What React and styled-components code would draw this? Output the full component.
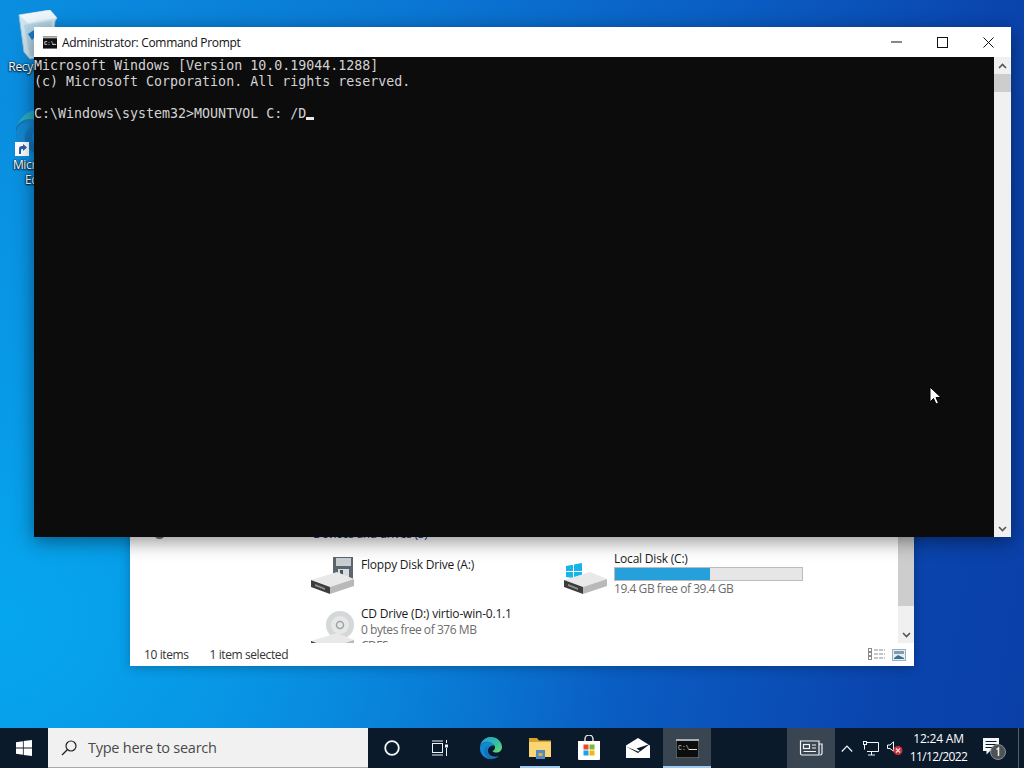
import React from 'react';
import styled, { createGlobalStyle } from 'styled-components';

const uiFont = `'Open Sans', 'Liberation Sans', sans-serif`;

const GlobalStyle = createGlobalStyle`
  html, body {
    margin: 0;
    padding: 0;
    overflow: hidden;
    font-family: ${uiFont};
  }
  * {
    box-sizing: border-box;
  }
`;

const Screen = styled.div`
  width: 1024px;
  height: 768px;
  display: flex;
  flex-direction: column;
  overflow: hidden;
`;

const Desktop = styled.div`
  position: relative;
  flex: 1;
  background:
    radial-gradient(ellipse 620px 520px at 0% 85%, #06a6ee 0%, rgba(6, 166, 238, 0) 100%),
    linear-gradient(100deg, #0a8fe0 0%, #0a78d4 35%, #0a5cc2 65%, #0a44ad 88%, #0a3fa8 100%);
`;

const IconColumn = styled.div`
  display: flex;
  flex-direction: column;
  width: 76px;
  padding-top: 10px;
`;

const DesktopItem = styled.div`
  height: 98px;
  display: flex;
  flex-direction: column;
  align-items: center;
  gap: 1px;
`;

const DesktopLabel = styled.div`
  width: 76px;
  color: #fff;
  font-size: 12px;
  line-height: 15px;
  letter-spacing: -0.3px;
  text-align: center;
  text-shadow: 0 1px 2px #000, 0 0 2px #000;
`;

const Shortcut = styled.div`
  position: relative;
  width: 48px;
  height: 48px;
`;

const ShortcutBadge = styled.svg`
  position: absolute;
  left: 1px;
  bottom: 0;
`;

/* Explorer window peeking out below the console */
const ExplorerWindow = styled.div`
  position: absolute;
  left: 130px;
  top: 380px;
  width: 784px;
  height: 286px;
  display: flex;
  flex-direction: column;
  background: #fff;
  box-shadow: 0 2px 10px rgba(0, 0, 0, 0.25);
`;

const ExplorerBody = styled.div`
  flex: 1;
  min-height: 0;
  display: flex;
  overflow: hidden;
`;

const NavPane = styled.div`
  width: 180px;
  flex: none;
  padding: 152px 0 0 25px;
`;

const NavMark = styled.div`
  width: 9px;
  height: 7px;
  border-radius: 0 0 4px 4px;
  background: #777;
`;

const Drives = styled.div`
  flex: 1;
  padding-top: 146px;
`;

const GroupHeading = styled.div`
  height: 24px;
  padding-left: 3px;
  font-size: 12px;
  line-height: 16px;
  letter-spacing: -0.3px;
  color: #1a3e8c;
`;

const DriveGrid = styled.div`
  display: grid;
  grid-template-columns: 253px 1fr;
  grid-auto-rows: 48px;
  row-gap: 7px;
`;

const DriveTile = styled.div`
  display: flex;
  gap: 5px;
  align-items: flex-start;
`;

const DriveInfo = styled.div`
  padding-top: ${(props) => props.$top || 0}px;
  display: flex;
  flex-direction: column;
`;

const DriveName = styled.div`
  font-size: 12px;
  line-height: 17px;
  letter-spacing: -0.2px;
  color: #1a1a1a;
  white-space: nowrap;
`;

const DriveSub = styled.div`
  font-size: 12px;
  line-height: 16px;
  letter-spacing: -0.45px;
  color: #6d6d6d;
  white-space: nowrap;
`;

const UsageBar = styled.div`
  width: 189px;
  height: 14px;
  border: 1px solid #bcbcbc;
  background: #e6e6e6;
`;

const UsageFill = styled.div`
  height: 100%;
  background: #26a0da;
`;

const ScrollBar = styled.div`
  flex: none;
  width: ${(props) => props.$width}px;
  display: flex;
  flex-direction: column;
  background: #f0f0f0;
`;

const ScrollArrow = styled.div`
  height: 17px;
  flex: none;
  display: flex;
  align-items: center;
  justify-content: center;
`;

const ScrollThumb = styled.div`
  flex: none;
  height: ${(props) => props.$height}px;
  background: #cdcdcd;
`;

const ScrollTrack = styled.div`
  flex: 1;
`;

const StatusBar = styled.div`
  height: 23px;
  flex: none;
  display: flex;
  align-items: center;
  padding: 0 8px 0 14px;
  font-size: 12px;
  letter-spacing: -0.4px;
  color: #333;
`;

const StatusText = styled.span`
  margin-right: 21px;
`;

const ViewButtons = styled.div`
  margin-left: auto;
  display: flex;
  gap: 6px;
  align-items: center;
`;

/* Console window */
const ConsoleWindow = styled.div`
  position: absolute;
  left: 34px;
  top: 27px;
  width: 977px;
  height: 510px;
  display: flex;
  flex-direction: column;
  background: #fff;
  box-shadow: 0 4px 18px rgba(0, 0, 0, 0.45);
`;

const TitleBar = styled.div`
  height: 30px;
  flex: none;
  display: flex;
  align-items: center;
  padding-left: 9px;
  background: #fff;
`;

const TitleText = styled.div`
  margin-left: 5px;
  font-size: 12px;
  letter-spacing: -0.3px;
  color: #111;
`;

const WindowControls = styled.div`
  margin-left: auto;
  display: flex;
  height: 100%;
`;

const ControlButton = styled.div`
  width: 46px;
  display: flex;
  align-items: center;
  justify-content: center;
`;

const ConsoleBody = styled.div`
  flex: 1;
  min-height: 0;
  display: flex;
  background: #0c0c0c;
`;

const ConsoleText = styled.pre`
  flex: 1;
  margin: 0;
  padding-top: 1px;
  font-family: 'DejaVu Sans Mono', 'Liberation Mono', monospace;
  font-size: 13.3px;
  line-height: 16px;
  color: #d2d2d2;
`;

const Caret = styled.span`
  display: inline-block;
  width: 8px;
  height: 3px;
  background: #e8e8e8;
  vertical-align: -2px;
`;

const Pointer = styled.svg`
  position: absolute;
  left: 929px;
  top: 386px;
`;

/* Taskbar */
const Taskbar = styled.div`
  height: 40px;
  flex: none;
  display: flex;
  align-items: stretch;
  background: #0b1a2b;
`;

const StartButton = styled.div`
  width: 48px;
  display: flex;
  align-items: center;
  justify-content: center;
`;

const SearchBox = styled.div`
  width: 320px;
  display: flex;
  align-items: center;
  gap: 11px;
  padding-left: 13px;
  background: #f1f1f1;
  border-bottom: 1px solid #a8a8a8;
`;

const SearchHint = styled.span`
  font-size: 14.5px;
  letter-spacing: -0.25px;
  color: #4a4a4a;
`;

const TaskButton = styled.div`
  position: relative;
  width: ${(props) => props.$width || 49}px;
  display: flex;
  align-items: center;
  justify-content: center;
  background: ${(props) => (props.$active ? '#3a4552' : 'transparent')};
`;

const RunningMark = styled.div`
  position: absolute;
  bottom: 0;
  left: ${(props) => (props.$full ? 0 : 5)}px;
  right: ${(props) => (props.$full ? 0 : 4)}px;
  height: 2px;
  background: #9ccaf0;
`;

const PinnedGap = styled.div`
  width: 2px;
`;

const Tray = styled.div`
  margin-left: auto;
  display: flex;
  align-items: stretch;
`;

const TrayIcon = styled.div`
  width: ${(props) => props.$width || 24}px;
  display: flex;
  align-items: center;
  justify-content: center;
`;

const Clock = styled.div`
  width: 63px;
  display: flex;
  flex-direction: column;
  justify-content: center;
  text-align: center;
  color: #fff;
  font-size: 12px;
  line-height: 18px;
  letter-spacing: -0.2px;
`;

const ClockDate = styled.div`
  letter-spacing: -0.6px;
`;

const ShowDesktop = styled.div`
  width: 6px;
  border-left: 1px solid #56606c;
`;

const NotificationSlot = styled.div`
  width: 48px;
  display: flex;
  align-items: center;
  justify-content: center;
`;

const WindowsLogo = ({ size = 16, fill = '#fff' }) => (
  <svg width={size} height={size} viewBox="0 0 16 16">
    <path fill={fill} d="M0 2.2 6.9 1.2V7.6H0ZM7.7 1.1 16 0V7.6H7.7ZM0 8.4H6.9V14.8L0 13.8ZM7.7 8.4H16V16L7.7 14.9Z" />
  </svg>
);

const EdgeLogo = ({ size = 24 }) => (
  <svg width={size} height={size} viewBox="0 0 48 48">
    <defs>
      <linearGradient id="edgeBlue" x1="0" y1="1" x2="1" y2="0.3">
        <stop offset="0" stopColor="#0c59a4" />
        <stop offset="1" stopColor="#1b9de2" />
      </linearGradient>
      <linearGradient id="edgeGreen" x1="0" y1="0" x2="1" y2="1">
        <stop offset="0" stopColor="#1f9fd8" />
        <stop offset="0.6" stopColor="#35c1a0" />
        <stop offset="1" stopColor="#6edc6a" />
      </linearGradient>
    </defs>
    <path fill="url(#edgeBlue)" d="M24 2C11 2 2 12 2 24c0 13 10 22 22 22 6 0 12-2 16-6-8 3-20 1-22-9-1-5 2-9 6-11 5-2 10 0 10 0C33 12 30 2 24 2Z" />
    <path fill="url(#edgeGreen)" d="M24 2c13 0 22 10 22 20 0 7-5 11-11 11-4 0-7-1-8-3 3-1 5-3 5-7 0-7-8-12-16-12-6 0-12 3-14 9C5 10 13 2 24 2Z" />
    <path fill="#1387cf" d="M2 24c0 13 10 22 22 22-8-2-14-9-13-18 1-6 6-11 13-11-3-2-7-3-10-3C8 14 3 18 2 24Z" />
  </svg>
);

const RecycleBinIcon = () => (
  <svg width="48" height="50" viewBox="0 0 48 50">
    <path fill="#cfe6f2" stroke="#9fc4d8" strokeWidth="1" d="M5 5 36 0 43 8 41 11 37 46 16 49 10 42Z" />
    <path fill="#eef7fb" d="M5 5 36 0 43 8 14 13Z" />
    <path fill="#a9d0e4" d="M10 15 38 11 35 43 16 46Z" opacity="0.7" />
    <path fill="#1f7fd0" d="M14 24 20 20 22 26 18 30Z M24 32 30 28 28 36 22 38Z" />
  </svg>
);

const DriveBody = () => (
  <>
    <path fill="#e9e9e9" d="M1 30 27 22 44 29 20 37Z" />
    <path fill="#3d3d3d" d="M1 30 20 37V44L1 37Z" />
    <path fill="#b9b9b9" d="M20 37 44 29V36L20 44Z" />
    <path fill="#8f8f8f" d="M5 34 15 38V40L5 36Z" />
  </>
);

const FloppyDriveIcon = () => (
  <svg width="46" height="44" viewBox="0 0 46 44">
    <path fill="#5c6670" d="M23 7H43V29L23 29Z" />
    <rect x="26" y="8" width="15" height="8" fill="#c9ced2" />
    <rect x="28" y="19" width="11" height="8" fill="#d8dcdf" />
    <rect x="30" y="20" width="3" height="6" fill="#4a525a" />
    <DriveBody />
  </svg>
);

const LocalDiskIcon = () => (
  <svg width="46" height="44" viewBox="0 0 46 44">
    <g fill="#16b4ea" transform="translate(2 6)">
      <path d="M1 10 8 8.700V15H1Z M9 8.500 17 7V15H9Z M1 16H8V22L1 21Z M9 16H17V23L9 22Z" />
    </g>
    <DriveBody />
  </svg>
);

const CdDriveIcon = () => (
  <svg width="46" height="44" viewBox="0 0 46 44">
    <circle cx="30" cy="20" r="14" fill="#d4d8d8" />
    <circle cx="30" cy="20" r="9" fill="#e6e8e8" />
    <circle cx="30" cy="20" r="3.500" fill="none" stroke="#9ea3a3" strokeWidth="1.500" />
    <g transform="translate(0 6)">
      <DriveBody />
    </g>
  </svg>
);

const CmdIcon = ({ size = 14, tall = 13, border = '#b8b8b8' }) => (
  <svg width={size} height={tall} viewBox="0 0 15 13">
    <rect x="0" y="0" width="15" height="13" fill="#111" />
    <rect x="0" y="0" width="15" height="2" fill={border} />
    <text x="1" y="9" fontSize="6" fontFamily="Liberation Mono, monospace" fontWeight="700" fill="#ddd">C:\</text>
    <rect x="10" y="8" width="4" height="1" fill="#ddd" />
  </svg>
);

const drives = [
  { key: 'floppy', Icon: FloppyDriveIcon, name: 'Floppy Disk Drive (A:)', top: 6 },
  { key: 'local', Icon: LocalDiskIcon, name: 'Local Disk (C:)', free: 19.4, total: 39.4 },
  { key: 'cd', Icon: CdDriveIcon, name: 'CD Drive (D:) virtio-win-0.1.1', lines: ['0 bytes free of 376 MB', 'CDFS'] },
];

const App = () => {
  return (
    <Screen>
      <GlobalStyle />
      <Desktop>
        <IconColumn>
          <DesktopItem>
            <Shortcut>
              <RecycleBinIcon />
            </Shortcut>
            <DesktopLabel>Recycle Bin</DesktopLabel>
          </DesktopItem>
          <DesktopItem>
            <Shortcut>
              <EdgeLogo size={48} />
              <ShortcutBadge width="14" height="14" viewBox="0 0 14 14">
                <rect width="14" height="14" fill="#fff" />
                <path fill="#2a5fa8" d="M4 12V7c0-2 1-3 3-3h1V2l4 3.500-4 3.500V7H7C6 7 6 8 6 9v3Z" />
              </ShortcutBadge>
            </Shortcut>
            <DesktopLabel>Microsoft Edge</DesktopLabel>
          </DesktopItem>
        </IconColumn>

        <ExplorerWindow>
          <ExplorerBody>
            <NavPane>
              <NavMark />
            </NavPane>
            <Drives>
              <GroupHeading>Devices and drives (3)</GroupHeading>
              <DriveGrid>
                {drives.map(({ key, Icon, name, top, free, total, lines }) => (
                  <DriveTile key={key}>
                    <Icon />
                    <DriveInfo $top={top}>
                      <DriveName>{name}</DriveName>
                      {total && (
                        <>
                          <UsageBar>
                            <UsageFill style={{ width: `${((total - free) / total) * 100}%` }} />
                          </UsageBar>
                          <DriveSub>{`${free} GB free of ${total} GB`}</DriveSub>
                        </>
                      )}
                      {lines && lines.map((line) => <DriveSub key={line}>{line}</DriveSub>)}
                    </DriveInfo>
                  </DriveTile>
                ))}
              </DriveGrid>
            </Drives>
            <ScrollBar $width={16}>
              <ScrollArrow />
              <ScrollThumb $height={209} />
              <ScrollTrack />
              <ScrollArrow>
                <svg width="9" height="6" viewBox="0 0 9 6">
                  <path d="M1 1 4.500 4.500 8 1" fill="none" stroke="#555" strokeWidth="1.600" />
                </svg>
              </ScrollArrow>
            </ScrollBar>
          </ExplorerBody>
          <StatusBar>
            <StatusText>10 items</StatusText>
            <StatusText>1 item selected</StatusText>
            <ViewButtons>
              <svg width="18" height="13" viewBox="0 0 18 13">
                <g fill="none" stroke="#8a8a8a">
                  <rect x="0.500" y="0.500" width="3" height="3" />
                  <rect x="0.500" y="4.500" width="3" height="3" />
                  <rect x="0.500" y="8.500" width="3" height="3" />
                  <path d="M6 2H17M6 6H17M6 10H17" strokeDasharray="4 1" />
                </g>
              </svg>
              <svg width="14" height="12" viewBox="0 0 14 12">
                <rect x="0.500" y="0.500" width="13" height="11" fill="#e4eef5" stroke="#9ab0c0" />
                <rect x="2" y="2" width="10" height="3" fill="#7f9db3" />
                <path d="M2 9 6 6 12 9V10H2Z" fill="#3f6f8f" />
              </svg>
            </ViewButtons>
          </StatusBar>
        </ExplorerWindow>

        <ConsoleWindow>
          <TitleBar>
            <CmdIcon />
            <TitleText>Administrator: Command Prompt</TitleText>
            <WindowControls>
              <ControlButton>
                <svg width="11" height="11" viewBox="0 0 11 11">
                  <path d="M0 5H11" stroke="#111" strokeWidth="1" />
                </svg>
              </ControlButton>
              <ControlButton>
                <svg width="11" height="11" viewBox="0 0 11 11">
                  <rect x="0.500" y="0.500" width="10" height="10" fill="none" stroke="#111" />
                </svg>
              </ControlButton>
              <ControlButton>
                <svg width="11" height="11" viewBox="0 0 11 11">
                  <path d="M0.500 0.500 10.500 10.500M10.500 0.500 0.500 10.500" stroke="#111" />
                </svg>
              </ControlButton>
            </WindowControls>
          </TitleBar>
          <ConsoleBody>
            <ConsoleText>
              {'Microsoft Windows [Version 10.0.19044.1288]\n(c) Microsoft Corporation. All rights reserved.\n\nC:\\Windows\\system32>MOUNTVOL C: /D'}
              <Caret />
            </ConsoleText>
            <ScrollBar $width={17}>
              <ScrollArrow>
                <svg width="9" height="6" viewBox="0 0 9 6">
                  <path d="M1 5 4.500 1.500 8 5" fill="none" stroke="#555" strokeWidth="1.600" />
                </svg>
              </ScrollArrow>
              <ScrollThumb $height={18} />
              <ScrollTrack />
              <ScrollArrow>
                <svg width="9" height="6" viewBox="0 0 9 6">
                  <path d="M1 1 4.500 4.500 8 1" fill="none" stroke="#555" strokeWidth="1.600" />
                </svg>
              </ScrollArrow>
            </ScrollBar>
          </ConsoleBody>
        </ConsoleWindow>

        <Pointer width="13" height="20" viewBox="0 0 13 20">
          <path d="M1 1V16L4.500 12.500 7 18 9.500 17 7 11.500H12Z" fill="#fff" stroke="#000" strokeWidth="1" />
        </Pointer>
      </Desktop>

      <Taskbar>
        <StartButton>
          <WindowsLogo />
        </StartButton>
        <SearchBox>
          <svg width="16" height="16" viewBox="0 0 16 16">
            <circle cx="10" cy="6" r="5" fill="none" stroke="#222" strokeWidth="1.200" />
            <path d="M6.300 9.700 1 15" stroke="#222" strokeWidth="1.300" />
          </svg>
          <SearchHint>Type here to search</SearchHint>
        </SearchBox>
        <TaskButton $width={48}>
          <svg width="16" height="16" viewBox="0 0 16 16">
            <circle cx="8" cy="8" r="6.800" fill="none" stroke="#f2f5f8" strokeWidth="1.800" />
          </svg>
        </TaskButton>
        <TaskButton $width={48}>
          <svg width="16" height="16" viewBox="0 0 16 16">
            <g fill="none" stroke="#eef2f6" strokeWidth="1">
              <rect x="0.500" y="3.500" width="10" height="9" />
              <path d="M0 1H11M0 15H11M14.500 0V3M14.500 8V16" />
            </g>
            <rect x="13" y="4.500" width="3" height="3" fill="#eef2f6" />
          </svg>
        </TaskButton>
        <PinnedGap />
        <TaskButton>
          <EdgeLogo />
        </TaskButton>
        <TaskButton>
          <svg width="24" height="24" viewBox="0 0 24 24">
            <path fill="#d8a531" d="M1 2H9L11 4.500H23V8H1Z" />
            <path fill="#f9d673" d="M1 6H23V21H1Z" />
            <rect x="8" y="14" width="9" height="9" fill="#4d8bc2" />
            <rect x="10.500" y="17" width="4" height="3" fill="#d9b34a" />
          </svg>
          <RunningMark />
        </TaskButton>
        <TaskButton>
          <svg width="24" height="26" viewBox="0 0 24 26">
            <path d="M8 7V4a4 4 0 0 1 8 0v3" fill="none" stroke="#e8e8e8" strokeWidth="1.400" />
            <path fill="#fff" d="M1 6H23V24Q23 25 22 25H2Q1 25 1 24Z" />
            <rect x="6.500" y="9.500" width="5" height="5" fill="#e8492c" />
            <rect x="12.500" y="9.500" width="5" height="5" fill="#7cb82a" />
            <rect x="6.500" y="15.500" width="5" height="5" fill="#1aa3e8" />
            <rect x="12.500" y="15.500" width="5" height="5" fill="#f5b614" />
          </svg>
        </TaskButton>
        <TaskButton $width={50}>
          <svg width="24" height="20" viewBox="0 0 24 20">
            <path fill="#fff" d="M12 0 24 7.500V20H0V7.500Z" />
            <path fill="#0b1a2b" d="M0 8.500 12 15 24 6 10.500 10.500 14 13 12 13.500Z" />
          </svg>
        </TaskButton>
        <TaskButton $active $width={48}>
          <svg width="23" height="19" viewBox="0 0 23 19">
            <rect width="23" height="19" fill="#0d0d0d" stroke="#9aa0a6" />
            <rect x="0" y="0" width="23" height="2" fill="#a8aeb4" />
            <text x="2" y="11" fontSize="6.500" fontFamily="Liberation Mono, monospace" fill="#d8d8d8">C:\</text>
            <rect x="13" y="10" width="8" height="1" fill="#e4e4e4" />
          </svg>
          <RunningMark $full />
        </TaskButton>
        <Tray>
          <TaskButton $active $width={48}>
            <svg width="24" height="16" viewBox="0 0 24 16">
              <g fill="none" stroke="#f2f5f8" strokeWidth="1.200">
                <path d="M1.500 1H20V15H3Q1.500 15 1.500 13.500ZM20 4H23V13.500Q23 15 21 15" />
                <rect x="4.500" y="4.500" width="6" height="4" />
                <path d="M13 5H17M13 8H17M4.500 11.500H17" />
              </g>
            </svg>
          </TaskButton>
          <TrayIcon>
            <svg width="12" height="7" viewBox="0 0 12 7">
              <path d="M0.800 6.500 6 1.200 11.200 6.500" fill="none" stroke="#f2f5f8" strokeWidth="1.200" />
            </svg>
          </TrayIcon>
          <TrayIcon>
            <svg width="16" height="15" viewBox="0 0 16 15">
              <g fill="none" stroke="#f2f5f8">
                <path d="M3 1.500H15.500V10.500H4" />
                <rect x="0.500" y="0.500" width="3" height="3" fill="#0b1a2b" />
                <path d="M1.500 4V8.500M5 14H12M8.500 10.500V14" />
              </g>
            </svg>
          </TrayIcon>
          <TrayIcon>
            <svg width="16" height="14" viewBox="0 0 16 14">
              <path d="M0.500 4H3L6.500 0.800V10.200L3 7.500H0.500Z" fill="none" stroke="#f2f5f8" />
              <circle cx="11" cy="9.500" r="4.500" fill="#c9313d" />
              <path d="M9 7.500 13 11.500M13 7.500 9 11.500" stroke="#f6dede" strokeWidth="1.100" />
            </svg>
          </TrayIcon>
          <Clock>
            <div>12:24 AM</div>
            <ClockDate>11/12/2022</ClockDate>
          </Clock>
          <NotificationSlot>
            <svg width="24" height="24" viewBox="0 0 24 24">
              <path fill="#f4f6f8" d="M1 2H17V15H8L4.500 18.500V15H1Z" />
              <path d="M3.500 5.500H14.500M3.500 8.500H14.500M3.500 11.500H11" stroke="#0b1a2b" strokeWidth="1.200" />
              <circle cx="16" cy="16" r="7.500" fill="#4e5357" stroke="#8a8e91" />
              <path d="M14.500 13.500 16.500 12V20" fill="none" stroke="#f0f0f0" strokeWidth="1.500" />
            </svg>
          </NotificationSlot>
          <ShowDesktop />
        </Tray>
      </Taskbar>
    </Screen>
  );
};

export default App;
